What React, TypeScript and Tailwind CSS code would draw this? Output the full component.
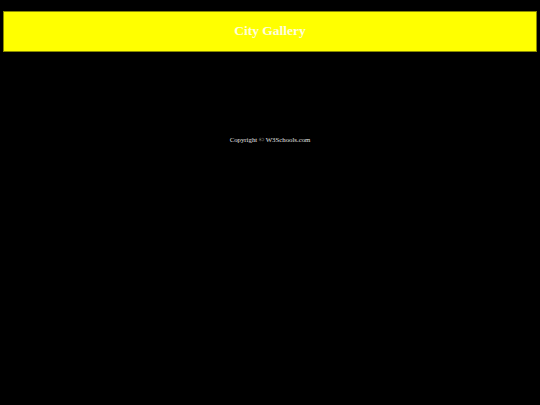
export default function App() {
  return (
    <div className="min-h-[405px] bg-black px-[3px] pt-[11px] font-['Liberation_Serif',serif]">
      <header className="flex h-[41px] items-center justify-center border border-[#8a8a00] bg-[#ffff00]">
        <h1 className="text-[13.5px] font-bold text-[#fffde0]">City Gallery</h1>
      </header>
      <footer className="mt-[83px] text-center text-[6.8px] leading-[10px] text-[#e0e0e0]">
        Copyright © W3Schools.com
      </footer>
    </div>
  );
}
